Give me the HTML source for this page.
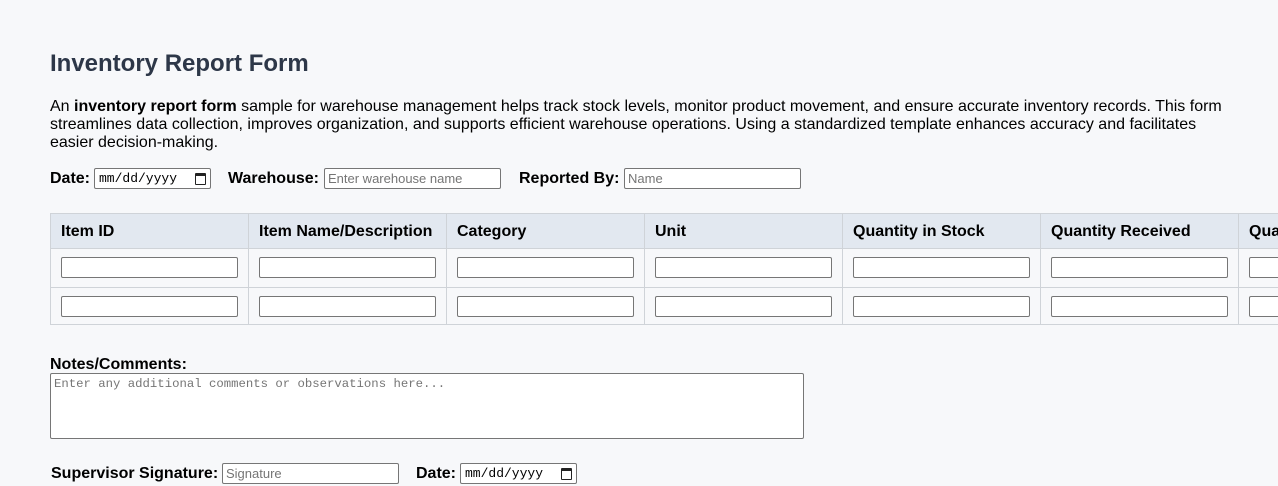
<!DOCTYPE html>
<html><head><meta charset="utf-8"><style>
*{box-sizing:border-box;margin:0;padding:0}
html,body{overflow:hidden}
body{width:1278px;height:486px;background:#f7f8fa;font-family:"Liberation Sans",Arial,sans-serif;color:#000;position:relative}
.a{position:absolute;white-space:nowrap}
h1{position:absolute;left:50px;top:50px;font-size:24px;font-weight:bold;color:#2d3748;line-height:28px}
p.d{position:absolute;left:50px;top:98px;width:1190px;font-size:16px;line-height:18px;white-space:normal}
.lb{font-size:16px;font-weight:bold;line-height:18px}
.in{position:absolute;background:#fff;border:1px solid #767676;border-radius:2px;height:21px;font-size:13px;color:#757575;padding:2px 3px;line-height:15px;white-space:nowrap;overflow:hidden}
.dt{position:absolute;background:#fff;border:1px solid #767676;border-radius:2px;height:21px;font-family:"Liberation Mono",monospace;font-size:13px;line-height:17px;padding:1px 4px;color:#000;white-space:nowrap}
.cal{position:absolute;right:4px;top:4px;width:11px;height:12px;border:1.5px solid #222;border-top-width:3px;border-radius:1px}
.col{position:absolute;top:213px;width:199px;height:112px;border:1px solid #cfd3d8;border-right:none;overflow:hidden}
.hd{height:35px;background:#e2e8f0;border-bottom:1px solid #cfd3d8;font-weight:bold;font-size:16px;line-height:35px;padding-left:10px;white-space:nowrap;overflow:hidden}
.r{height:38px;position:relative}
.r+.r{border-top:1px solid #cfd3d8}
.r .in{left:10px;top:8px;width:177px}
</style></head><body>
<h1>Inventory Report Form</h1>
<p class="d">An <b>inventory report form</b> sample for warehouse management helps track stock levels, monitor product movement, and ensure accurate inventory records. This form streamlines data collection, improves organization, and supports efficient warehouse operations. Using a standardized template enhances accuracy and facilitates easier decision-making.</p>

<div class="a lb" style="left:50px;top:170px">Date:</div>
<div class="dt" style="left:94px;top:168px;width:117px">mm/dd/yyyy<span class="cal"></span></div>
<div class="a lb" style="left:228px;top:170px">Warehouse:</div>
<div class="in" style="left:324px;top:168px;width:177px">Enter warehouse name</div>
<div class="a lb" style="left:519px;top:170px">Reported By:</div>
<div class="in" style="left:624px;top:168px;width:177px">Name</div>

<div class="col" style="left:50px"><div class="hd">Item ID</div><div class="r"><div class="in"></div></div><div class="r"><div class="in"></div></div></div>
<div class="col" style="left:248px"><div class="hd">Item Name/Description</div><div class="r"><div class="in"></div></div><div class="r"><div class="in"></div></div></div>
<div class="col" style="left:446px"><div class="hd">Category</div><div class="r"><div class="in"></div></div><div class="r"><div class="in"></div></div></div>
<div class="col" style="left:644px"><div class="hd">Unit</div><div class="r"><div class="in"></div></div><div class="r"><div class="in"></div></div></div>
<div class="col" style="left:842px"><div class="hd">Quantity in Stock</div><div class="r"><div class="in"></div></div><div class="r"><div class="in"></div></div></div>
<div class="col" style="left:1040px"><div class="hd">Quantity Received</div><div class="r"><div class="in"></div></div><div class="r"><div class="in"></div></div></div>
<div class="col" style="left:1238px;width:40px"><div class="hd">Quantity Issued</div><div class="r"><div class="in"></div></div><div class="r"><div class="in"></div></div></div>

<div class="a lb" style="left:50px;top:356px">Notes/Comments:</div>
<div class="in" style="left:50px;top:373px;width:754px;height:66px;font-family:'Liberation Mono',monospace;font-size:12.3px;padding:3px 3px">Enter any additional comments or observations here...</div>

<div class="a lb" style="left:51px;top:465px">Supervisor Signature:</div>
<div class="in" style="left:222px;top:463px;width:177px">Signature</div>
<div class="a lb" style="left:416px;top:465px">Date:</div>
<div class="dt" style="left:460px;top:463px;width:117px">mm/dd/yyyy<span class="cal"></span></div>
</body></html>
